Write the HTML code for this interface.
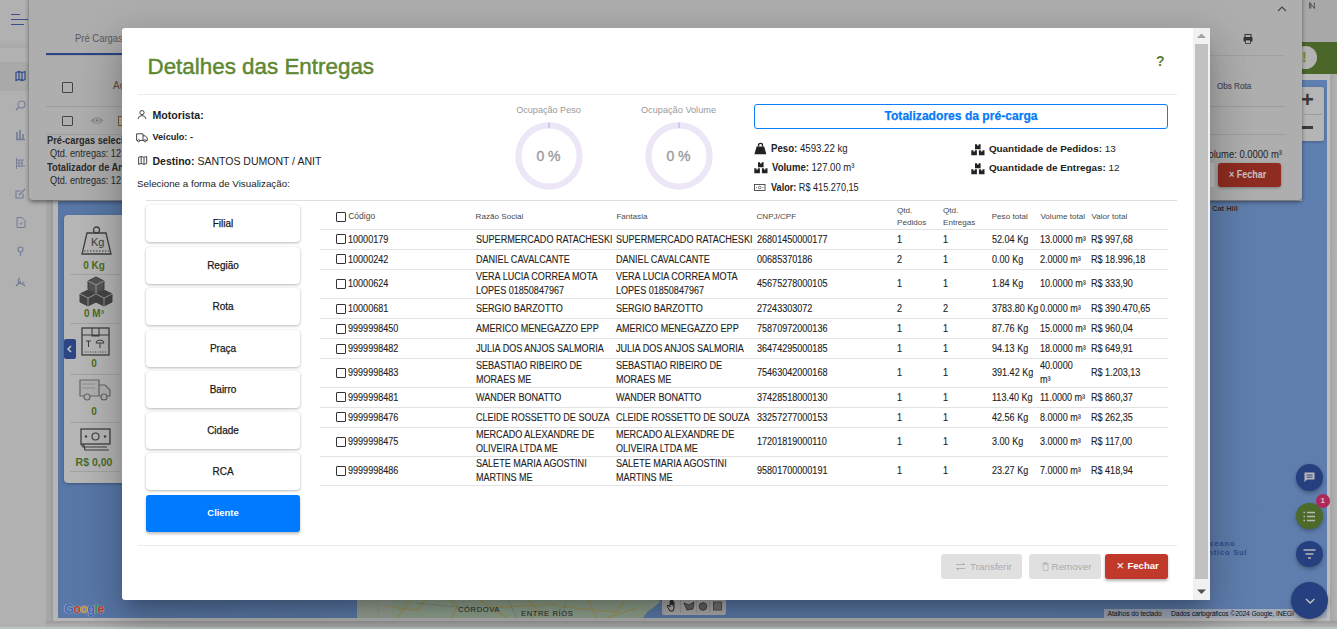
<!DOCTYPE html>
<html><head><meta charset="utf-8">
<style>
*{box-sizing:border-box}
html,body{margin:0;padding:0}
body{width:1337px;height:629px;overflow:hidden;position:relative;background:#b2b2b2;font-family:"Liberation Sans",sans-serif;color:#222}
.a{position:absolute}
.t{position:absolute;white-space:nowrap}
svg{position:absolute;overflow:visible}
</style></head>
<body>

<div class="a" style="left:0px;top:0px;width:1337px;height:629px;background:#b1b1b1"></div>
<div class="a" style="left:0px;top:0px;width:53px;height:629px;background:#b1b1b1"></div>
<div class="a" style="left:0px;top:40px;width:53px;height:8px;background:linear-gradient(#b0b0b0,#a9a9a9)"></div>
<div class="a" style="left:0px;top:62px;width:53px;height:29px;background:#a9a9a9"></div>
<div class="a" style="left:46px;top:199px;width:7px;height:430px;background:#adadad"></div>
<div class="a" style="left:11px;top:13.5px;width:9px;height:1.2px;background:#3a4f8c"></div>
<div class="a" style="left:11px;top:18.8px;width:17px;height:1.2px;background:#3a4f8c"></div>
<div class="a" style="left:11px;top:23.5px;width:13px;height:1.2px;background:#3a4f8c"></div>
<svg style="left:15px;top:71px" width="11" height="10"><path d="M1 1.5 L4 0.5 L7 1.5 L10 0.5 V8.5 L7 9.5 L4 8.5 L1 9.5 Z M4 0.5 V8.5 M7 1.5 V9.5" fill="none" stroke="#2f4a8c" stroke-width="1.2"/></svg>
<svg style="left:15px;top:100px" width="11" height="11"><circle cx="6.5" cy="4.5" r="3.5" fill="none" stroke="#747b95" stroke-width="1.1"/><path d="M4 7 L1 10" stroke="#747b95" stroke-width="1.3"/></svg>
<svg style="left:15px;top:129px" width="11" height="11"><path d="M2 10 V3 M5 10 V1 M8 10 V5 M1 10.5 H10" stroke="#747b95" stroke-width="1.6"/></svg>
<svg style="left:15px;top:158px" width="11" height="11"><path d="M1.5 0 V11 M1.5 2 H9 M1.5 5 H8 M1.5 8 H10 M4 2 V9 M7 2 V9" fill="none" stroke="#747b95" stroke-width="0.9"/></svg>
<svg style="left:15px;top:188px" width="11" height="11"><path d="M8 5.5 V10 H1 V3 H5.5 M4 7 L10 1" fill="none" stroke="#747b95" stroke-width="1.1"/></svg>
<svg style="left:16px;top:217px" width="10" height="11"><path d="M1 0.5 H6 L9 3.5 V10.5 H1 Z M3.5 6 L5 7.5 L6.5 5" fill="none" stroke="#747b95" stroke-width="1"/></svg>
<svg style="left:16px;top:246px" width="9" height="11"><circle cx="4.5" cy="3.5" r="2.5" fill="none" stroke="#747b95" stroke-width="1.1"/><path d="M4.5 6 V10" stroke="#747b95" stroke-width="1.1"/></svg>
<svg style="left:15px;top:276px" width="11" height="11"><path d="M1 10 L6 5 M5 2 A3 3 0 1 0 9 6 M7 7 L10 10" fill="none" stroke="#747b95" stroke-width="1.3"/></svg>
<div class="a" style="left:1302px;top:0px;width:35px;height:43px;background:#a8a8a8"></div>
<svg style="left:1308.5px;top:2px" width="6" height="7"><path d="M0.6 6.5 V0.5 L5.4 6.5 V0.5 M1.8 1.5 V6.5" fill="none" stroke="#4a4a4a" stroke-width="0.9"/></svg>
<div class="a" style="left:1302px;top:42px;width:35px;height:32px;background:#4a6629"></div>
<div class="a" style="left:1293.5px;top:46px;width:23px;height:23px;border-radius:50%;background:#b3b3b3"></div>
<div class="t" style="left:1302px;top:50px;font-size:14px;line-height:15px;font-weight:700;color:#7a8a22">!</div>
<div class="a" style="left:53px;top:199px;width:1277px;height:422px;background:#b6b6b6"></div>
<div class="a" style="left:46px;top:199px;width:7px;height:422px;background:linear-gradient(90deg,#a7a7a7,#a4a4a4 70%,#9a9a9a)"></div>
<div class="a" style="left:1330px;top:74px;width:7px;height:555px;background:linear-gradient(90deg,#a6a6a6,#b2b2b2)"></div>
<div class="a" style="left:1327px;top:74px;width:3px;height:547px;background:#bdbdbd"></div>
<div class="a" style="left:58px;top:201px;width:1269px;height:416.5px;background:linear-gradient(90deg,#5877a7 0%,#5f7faf 30%,#5f7eae 100%)"></div>
<div class="a" style="left:1302px;top:74px;width:25px;height:7px;background:#bababa"></div>
<div class="a" style="left:1302px;top:80px;width:25px;height:121px;background:#5f7fb0"></div>
<div class="a" style="left:1300px;top:87px;width:24px;height:54px;background:#b5b5b5;border-radius:2px;box-shadow:0 1px 3px rgba(0,0,0,.25)"></div>
<div class="a" style="left:1304px;top:114px;width:18px;height:1px;background:#9c9c9c"></div>
<div class="t" style="left:1301px;top:88px;font-size:22px;line-height:24px;color:#3a3a3a;font-weight:700">+</div>
<div class="a" style="left:1301px;top:126px;width:12px;height:2.5px;background:#3a3a3a"></div>
<div class="a" style="left:46px;top:621px;width:1291px;height:6px;background:linear-gradient(#9a9a9a,#a9a9a9 60%,#b0b0b0)"></div>
<div class="a" style="left:0px;top:627px;width:1337px;height:2px;background:#b9c8c3"></div>
<svg style="left:357px;top:598px" width="305" height="20"><path d="M0 0 H300 L303 4 L296 10 L290 14 L286 20 H0 Z" fill="#95a893"/><path d="M0 8 L30 0 M10 20 L25 8 L60 12 L70 0 M40 20 L55 0 M90 0 L100 8 L95 20 M120 0 L150 20 M170 0 L180 10 L175 20 M200 8 L260 14 L270 0 M230 0 L240 20 M280 10 L250 20 M130 10 L200 6" stroke="#a89a58" stroke-width="1.2" fill="none"/><path d="M20 0 L22 20 M60 5 L110 10 M150 0 L160 20 M210 0 L205 20" stroke="#5a665a" stroke-width="0.6" stroke-dasharray="1.5 1.5" fill="none"/><rect x="0" y="0" width="35" height="20" fill="#a3a7a0" opacity="0.6"/></svg>
<div class="t" style="left:458px;top:604.5px;font-size:7.6px;color:#2a2a2a;letter-spacing:0.6px">CÓRDOVA</div>
<div class="t" style="left:521px;top:608.5px;font-size:7.6px;color:#2a2a2a;letter-spacing:0.6px">ENTRE RÍOS</div>
<div class="a" style="left:662px;top:597px;width:64px;height:18px;background:#b3b3b3;border-radius:2px"></div>
<svg style="left:662px;top:597px" width="64" height="18"><path d="M8 14 L5 9 L6 8 L8 10 V4 H9 V8 V3 H10 V8 V3.5 H11 V8.5 V5 H12 V11 L11 14 Z" fill="none" stroke="#2a2a2a" stroke-width="1"/><path d="M22 6 L27 8 L32 5 L31 12 L25 13 Z" fill="#6a6a6a" stroke="#333" stroke-width="0.8"/><line x1="18.5" y1="3" x2="18.5" y2="16" stroke="#a3a3a3"/><line x1="34.5" y1="3" x2="34.5" y2="16" stroke="#a3a3a3"/><line x1="47.5" y1="3" x2="47.5" y2="16" stroke="#a3a3a3"/><circle cx="41" cy="9.5" r="3.8" fill="#6a6a6a" stroke="#333" stroke-width="0.8"/><rect x="51.5" y="5" width="8" height="8" fill="#7a7a7a" stroke="#444" stroke-width="0.8"/></svg>
<div class="t" style="left:64px;top:601.5px;font-size:12.5px;line-height:14px;font-weight:700;letter-spacing:-0.6px;text-shadow:0 0 1px #c8c8c8,0 0 1px #c8c8c8"><span style="color:#3b63b8">G</span><span style="color:#b5392c">o</span><span style="color:#b8922a">o</span><span style="color:#3b63b8">g</span><span style="color:#2f8a45">l</span><span style="color:#b5392c">e</span></div>
<div class="a" style="left:1104px;top:609.3px;width:223px;height:8.3px;background:#a3abbb"></div>
<div class="t" style="left:1107.5px;top:608.5px;font-size:6.8px;line-height:9px;color:#111;letter-spacing:-0.1px">Atalhos do teclado</div>
<div class="t" style="left:1171px;top:608.5px;font-size:6.8px;line-height:9px;color:#111;letter-spacing:-0.15px">Dados cartográficos ©2024 Google, INEGI &nbsp; Termos</div>
<div class="t" style="left:1212px;top:204px;font-size:7.5px;font-weight:700;color:#2a2a2a;text-shadow:0 0 1px #999">Cat Hill</div>
<div class="t" style="left:1203px;top:539px;font-size:7.5px;font-weight:700;color:#2f4c8c;letter-spacing:0.8px">Oceano</div>
<div class="t" style="left:1191px;top:548px;font-size:7.5px;font-weight:700;color:#2f4c8c;letter-spacing:0.8px">Atlântico Sul</div>
<div class="a" style="left:64px;top:215px;width:60px;height:268px;background:#b6b6b6;border-radius:4px 0 0 4px;box-shadow:0 1px 3px rgba(0,0,0,.3)"></div>
<svg style="left:80px;top:226px" width="33" height="30"><circle cx="16.5" cy="4" r="3" fill="none" stroke="#3f3f3f" stroke-width="1.3"/><path d="M7 7 H26 L31 28 H2 Z" fill="none" stroke="#3f3f3f" stroke-width="1.3"/><path d="M4 25 H29" stroke="#3f3f3f" stroke-width="1" stroke-dasharray="1.5 1.5"/><text x="11" y="20" font-size="11" fill="#3f3f3f" font-family="Liberation Sans">Kg</text></svg>
<div class="t" style="left:64px;width:60px;text-align:center;top:260px;font-size:10px;font-weight:700;color:#4d6b1f">0 Kg</div>
<div class="a" style="left:70px;top:274px;width:50px;height:1px;background:#a3a3a3"></div>
<svg style="left:79px;top:276px" width="34" height="31"><path d="M17 1 L25 5 L25 13 L17 17 L9 13 L9 5 Z" fill="#555" stroke="#3f3f3f"/><path d="M9 14 L17 18 L17 26 L9 30 L1 26 L1 18 Z" fill="#444" stroke="#3f3f3f"/><path d="M25 14 L33 18 L33 26 L25 30 L17 26 L17 18 Z" fill="#444" stroke="#3f3f3f"/><path d="M9 5 L17 9 L25 5 M17 9 V17 M1 18 L9 22 L17 18 M9 22 V30 M17 18 L25 22 L33 18 M25 22 V30" stroke="#aaa" stroke-width="0.8" fill="none"/></svg>
<div class="t" style="left:64px;width:60px;text-align:center;top:308px;font-size:10px;font-weight:700;color:#4d6b1f">0 M³</div>
<div class="a" style="left:70px;top:323px;width:50px;height:1px;background:#a3a3a3"></div>
<svg style="left:81px;top:327px" width="29" height="29"><rect x="1" y="1" width="27" height="27" fill="none" stroke="#3f3f3f" stroke-width="1.3"/><path d="M1 8 H28 M11 1 V9 H18 V1" fill="none" stroke="#3f3f3f" stroke-width="1.1"/><path d="M5 14 H10 M7.5 14 V20 M15 16 A4 3 0 0 1 23 16 Z M19 16 V21" stroke="#3f3f3f" fill="none"/><path d="M4 25 H25" stroke="#3f3f3f" stroke-dasharray="1 1.5"/></svg>
<div class="t" style="left:64px;width:60px;text-align:center;top:358px;font-size:10px;font-weight:700;color:#4d6b1f">0</div>
<div class="a" style="left:70px;top:374px;width:50px;height:1px;background:#a3a3a3"></div>
<div class="a" style="left:64px;top:339px;width:12px;height:20px;background:#2b4585;border-radius:2px"></div>
<svg style="left:66px;top:345px" width="8" height="8"><path d="M5 1 L2 4 L5 7" stroke="#c8c8c8" stroke-width="1.5" fill="none"/></svg>
<svg style="left:79px;top:379px" width="32" height="22"><path d="M1 1 H20 V17 H1 Z M20 6 H26 L31 11 V17 H20" fill="#b0b0b0" stroke="#666" stroke-width="1.2"/><circle cx="8" cy="18" r="3" fill="#b0b0b0" stroke="#666" stroke-width="1.2"/><circle cx="25" cy="18" r="3" fill="#b0b0b0" stroke="#666" stroke-width="1.2"/><path d="M3 5 H16 M3 9 H16" stroke="#888" stroke-width="0.8"/></svg>
<div class="t" style="left:64px;width:60px;text-align:center;top:406px;font-size:10px;font-weight:700;color:#4d6b1f">0</div>
<div class="a" style="left:70px;top:422px;width:50px;height:1px;background:#a3a3a3"></div>
<svg style="left:80px;top:428px" width="31" height="25"><path d="M3 14 L5 22 L29 22" fill="none" stroke="#3f3f3f" stroke-width="1.2"/><path d="M1 16 L3 19 L27 19" fill="none" stroke="#3f3f3f" stroke-width="1.2"/><rect x="1" y="1" width="29" height="15" fill="#b6b6b6" stroke="#3f3f3f" stroke-width="1.3"/><circle cx="15.5" cy="8.5" r="3.5" fill="none" stroke="#3f3f3f" stroke-width="1.2"/><circle cx="6" cy="8.5" r="1.2" fill="#3f3f3f"/><circle cx="25" cy="8.5" r="1.2" fill="#3f3f3f"/></svg>
<div class="t" style="left:64px;width:60px;text-align:center;top:456px;font-size:10.5px;font-weight:700;color:#4d6b1f">R$ 0,00</div>
<div class="a" style="left:70px;top:471px;width:50px;height:1px;background:#a3a3a3"></div>
<div class="a" style="left:1296.1000000000001px;top:464.3px;width:26.6px;height:26.6px;border-radius:50%;background:#263f7e;box-shadow:0 2px 4px rgba(0,0,0,.3)"></div>
<svg style="left:1304px;top:472px" width="11" height="11"><path d="M0.5 0.5 H10.5 V7.5 H3 L0.5 10 Z" fill="#b8b8b8"/><path d="M2.5 3 H8.5 M2.5 5.2 H8.5" stroke="#2d4585" stroke-width="1"/></svg>
<div class="a" style="left:1296.1000000000001px;top:502.8px;width:26.6px;height:26.6px;border-radius:50%;background:#4c6a28;box-shadow:0 2px 4px rgba(0,0,0,.3)"></div>
<svg style="left:1303px;top:511px" width="13" height="11"><path d="M4 1.5 H12 M4 5.5 H12 M4 9.5 H12 M0.5 1.5 H2 M0.5 5.5 H2 M0.5 9.5 H2" stroke="#b8b8b8" stroke-width="1.4"/></svg>
<div class="a" style="left:1315.7px;top:494.3px;width:14px;height:14px;border-radius:50%;background:#b0285a"></div>
<div class="t" style="left:1315.7px;width:14px;text-align:center;top:496px;font-size:8px;font-weight:700;color:#c8c8c8">1</div>
<div class="a" style="left:1296.1000000000001px;top:540.7px;width:26.6px;height:26.6px;border-radius:50%;background:#263f7e;box-shadow:0 2px 4px rgba(0,0,0,.3)"></div>
<svg style="left:1303px;top:549px" width="13" height="10"><path d="M0.5 1 H12.5 M2.5 5 H10.5 M5 9 H8" stroke="#b8b8b8" stroke-width="1.3"/></svg>
<div class="a" style="left:1291.3px;top:582.1px;width:36.8px;height:36.8px;border-radius:50%;background:#263f7e;box-shadow:0 2px 4px rgba(0,0,0,.3)"></div>
<svg style="left:1305px;top:597.5px" width="11" height="6"><path d="M1 1 L5.2 5 L9.4 1" stroke="#c0c0c0" stroke-width="1.5" fill="none"/></svg>
<div class="a" style="left:29px;top:-4px;width:1273px;height:203.5px;background:#aeaeae;border-radius:0 0 4px 4px;box-shadow:0 2px 4px rgba(0,0,0,.45)"></div>
<div class="t" style="left:75.4px;top:32px;font-size:10.5px;color:#5a5a5a;transform:scaleX(0.9);transform-origin:0 0">Pré Cargas</div>
<div class="a" style="left:46px;top:52.5px;width:80px;height:2px;background:#2b4585"></div>
<div class="a" style="left:46px;top:106px;width:1239px;height:1px;background:#9d9d9d"></div>
<div class="a" style="left:46px;top:134px;width:1239px;height:1px;background:#9d9d9d"></div>
<div class="a" style="left:46px;top:55px;width:1239px;height:1px;background:#a2a2a2"></div>
<div class="a" style="left:62px;top:82px;width:10.5px;height:10.5px;border:1.2px solid #444;border-radius:1px"></div>
<div class="a" style="left:62px;top:115.5px;width:10.5px;height:10.5px;border:1.2px solid #444;border-radius:1px"></div>
<div class="t" style="left:113px;top:80px;font-size:10px;color:#5a4a3a">Aç</div>
<svg style="left:90.3px;top:116px" width="14" height="9"><path d="M0.3 4.5 Q7 -2.5 13.7 4.5 Q7 11.5 0.3 4.5 Z" fill="#8e8e8e" /><circle cx="7" cy="4.5" r="2.6" fill="#a9a9a9"/><circle cx="7" cy="4.5" r="1.3" fill="#7a7a7a"/></svg>
<div class="a" style="left:118px;top:116px;width:5px;height:10px;border:1.2px solid #7a5a2a"></div>
<div class="t" style="left:47px;top:135.3px;font-size:10px;font-weight:700;color:#2a2a2a;transform:scaleX(0.93);transform-origin:0 0">Pré-cargas selecionadas</div>
<div class="t" style="left:49.7px;top:148.3px;font-size:10px;color:#2a2a2a;transform:scaleX(0.92);transform-origin:0 0">Qtd. entregas: 12</div>
<div class="t" style="left:47px;top:161.8px;font-size:10px;font-weight:700;color:#2a2a2a;transform:scaleX(0.93);transform-origin:0 0">Totalizador de Análise</div>
<div class="t" style="left:49.7px;top:175.3px;font-size:10px;color:#2a2a2a;transform:scaleX(0.92);transform-origin:0 0">Qtd. entregas: 12</div>
<svg style="left:1277px;top:5px" width="10" height="7"><path d="M1 6 L5 2 L9 6" stroke="#444" stroke-width="1.1" fill="none"/></svg>
<svg style="left:1243px;top:34px" width="10" height="10"><rect x="2" y="0.5" width="6" height="3" fill="none" stroke="#333"/><rect x="0.5" y="3" width="9" height="4.5" rx="1" fill="#333"/><rect x="2.5" y="6" width="5" height="3.5" fill="#b2b2b2" stroke="#333" stroke-width="0.8"/></svg>
<div class="t" style="left:1216.5px;top:81px;font-size:8.7px;line-height:10px;color:#4a4a5e;-webkit-text-stroke:0.2px #4a4a5e;transform:scaleX(0.93);transform-origin:0 0">Obs Rota</div>
<div class="t" style="left:1082px;width:200px;text-align:right;top:147.5px;font-size:10.5px;color:#222;transform:scaleX(0.9);transform-origin:100% 0">Volume: 0.0000 m³</div>
<div class="a" style="left:1210px;top:163px;width:4px;height:24px;background:#c0c0c0"></div>
<div class="a" style="left:1218px;top:163px;width:63px;height:24px;background:#8f2c21;border-radius:3px;box-shadow:0 1px 3px rgba(0,0,0,.3)"></div>
<div class="t" style="left:1229px;top:168.5px;font-size:10px;font-weight:700;color:#c4c4c4;transform:scaleX(0.9);transform-origin:0 0">× Fechar</div>
<div class="a" style="left:122px;top:28px;width:1088px;height:572px;background:#fff;border-radius:3px;box-shadow:0 11px 15px -7px rgba(0,0,0,.2),0 24px 38px 3px rgba(0,0,0,.14),0 9px 46px 8px rgba(0,0,0,.12)"></div>
<div class="t" style="left:147.5px;top:54.12px;font-size:22.4px;line-height:25.76px;font-weight:400;color:#5e8832;letter-spacing:0px;-webkit-text-stroke:0.45px #5e8832">Detalhes das Entregas</div>
<div class="t" style="left:1156px;top:52.95px;font-size:14px;line-height:16.10px;font-weight:700;color:#5a8030;letter-spacing:0px;">?</div>
<div class="a" style="left:138px;top:94px;width:1039px;height:1px;background:#e9ecef"></div>
<div class="t" style="left:152.5px;top:108.91px;font-size:10.6px;line-height:12.19px;font-weight:700;color:#222;letter-spacing:0px;">Motorista:</div>
<div class="t" style="left:152.5px;top:132.27px;font-size:9.1px;line-height:10.46px;font-weight:700;color:#222;letter-spacing:0px;">Veículo: -</div>
<div class="t" style="left:152.5px;top:154.96px;font-size:10.5px;line-height:12.07px;font-weight:400;color:#222;letter-spacing:0px;"><b>Destino:</b> SANTOS DUMONT / ANIT</div>
<div class="t" style="left:137px;top:177.87px;font-size:9.8px;line-height:11.27px;font-weight:400;color:#222;letter-spacing:0px;">Selecione a forma de Visualização:</div>
<svg style="left:137px;top:110px" width="10" height="10"><circle cx="5" cy="2.6" r="2.1" fill="none" stroke="#333" stroke-width="0.9"/><path d="M1 9 Q1.5 5.6 5 5.6 Q8.5 5.6 9 9" fill="none" stroke="#333" stroke-width="0.9"/></svg>
<svg style="left:136px;top:132.5px" width="12" height="10"><path d="M0.6 0.8 H7 V7.4 H0.6 Z M7 2.8 H9.3 L11.3 5 V7.4 H7" fill="none" stroke="#333" stroke-width="0.9"/><circle cx="2.6" cy="7.8" r="1.1" fill="#fff" stroke="#333" stroke-width="0.8"/><circle cx="9" cy="7.8" r="1.1" fill="#fff" stroke="#333" stroke-width="0.8"/></svg>
<svg style="left:137.5px;top:156px" width="10" height="9"><path d="M0.6 1.3 L3.2 0.5 L6 1.3 L8.7 0.5 V7.5 L6 8.3 L3.2 7.5 L0.6 8.3 Z M3.2 0.5 V7.5 M6 1.3 V8.3" fill="none" stroke="#333" stroke-width="0.9"/></svg>
<svg style="left:753.5px;top:142.5px" width="13" height="12"><path d="M4.5 3.6 V2 A2 1.6 0 0 1 8.5 2 V3.6" fill="none" stroke="#222" stroke-width="1.3"/><path d="M2.6 3.6 H10.2 L12.3 11.2 H0.4 Z" fill="#222"/></svg>
<svg style="left:753.8px;top:161.5px" width="14" height="12"><path d="M4 0.2 h2 v1.3 h1.6 v-1.3 h2 v5 h-5.6 z" fill="#222"/><path d="M0.3 6.2 h2 v1.3 h1.6 v-1.3 h2 v5 h-5.6 z" fill="#222"/><path d="M7.9 6.2 h2 v1.3 h1.6 v-1.3 h2 v5 h-5.6 z" fill="#222"/></svg>
<svg style="left:970.6px;top:143.5px" width="14" height="12"><path d="M4 0.2 h2 v1.3 h1.6 v-1.3 h2 v5 h-5.6 z" fill="#222"/><path d="M0.3 6.2 h2 v1.3 h1.6 v-1.3 h2 v5 h-5.6 z" fill="#222"/><path d="M7.9 6.2 h2 v1.3 h1.6 v-1.3 h2 v5 h-5.6 z" fill="#222"/></svg>
<svg style="left:970.6px;top:162.5px" width="14" height="12"><path d="M4 0.2 h2 v1.3 h1.6 v-1.3 h2 v5 h-5.6 z" fill="#222"/><path d="M0.3 6.2 h2 v1.3 h1.6 v-1.3 h2 v5 h-5.6 z" fill="#222"/><path d="M7.9 6.2 h2 v1.3 h1.6 v-1.3 h2 v5 h-5.6 z" fill="#222"/></svg>
<svg style="left:754px;top:183.8px" width="12" height="8"><rect x="0.5" y="0.5" width="10.5" height="6" fill="none" stroke="#444" stroke-width="0.9"/><circle cx="5.75" cy="3.5" r="1.3" fill="none" stroke="#444" stroke-width="0.7"/><path d="M2 3.5 H3 M8.5 3.5 H9.5" stroke="#444" stroke-width="0.7"/></svg>
<div class="t" style="left:348.5px;width:400px;text-align:center;top:104.77px;font-size:9.1px;line-height:10.46px;font-weight:400;color:#9a9a9a;letter-spacing:0px;">Ocupação Peso</div>
<svg style="left:514.5px;top:122.4px" width="68" height="68"><circle cx="34" cy="34" r="30.6" fill="none" stroke="#ece6f6" stroke-width="6.1"/><line x1="34" y1="0.5" x2="34" y2="6.2" stroke="#9aa6dc" stroke-width="0.8"/></svg>
<div class="t" style="left:348.5px;width:400px;text-align:center;top:147.95px;font-size:14px;line-height:16.10px;font-weight:400;color:#9a9a9a;letter-spacing:0px;-webkit-text-stroke:0.35px #9a9a9a">0 %</div>
<div class="t" style="left:478.5px;width:400px;text-align:center;top:104.71px;font-size:9.2px;line-height:10.58px;font-weight:400;color:#9a9a9a;letter-spacing:0px;">Ocupação Volume</div>
<svg style="left:644.5px;top:122.4px" width="68" height="68"><circle cx="34" cy="34" r="30.6" fill="none" stroke="#ece6f6" stroke-width="6.1"/><line x1="34" y1="0.5" x2="34" y2="6.2" stroke="#9aa6dc" stroke-width="0.8"/></svg>
<div class="t" style="left:478.5px;width:400px;text-align:center;top:147.95px;font-size:14px;line-height:16.10px;font-weight:400;color:#9a9a9a;letter-spacing:0px;-webkit-text-stroke:0.35px #9a9a9a">0 %</div>
<div class="a" style="left:754px;top:104px;width:414px;height:25px;border:1px solid #0d7df7;border-radius:3px"></div>
<div class="t" style="left:761px;width:400px;text-align:center;top:109.54px;font-size:12.1px;line-height:13.91px;font-weight:700;color:#087af7;letter-spacing:0px;-webkit-text-stroke:0.25px #087af7">Totalizadores da pré-carga</div>
<div class="t" style="left:770.5px;top:142.21px;font-size:10.6px;line-height:12.19px;font-weight:400;color:#222;letter-spacing:0px;transform:scaleX(0.91);transform-origin:0 0"><b>Peso:</b> 4593.22 kg</div>
<div class="t" style="left:771.9px;top:161.21px;font-size:10.6px;line-height:12.19px;font-weight:400;color:#222;letter-spacing:0px;transform:scaleX(0.90);transform-origin:0 0"><b>Volume:</b> 127.00 m³</div>
<div class="t" style="left:770.5px;top:180.91px;font-size:10.6px;line-height:12.19px;font-weight:400;color:#222;letter-spacing:0px;transform:scaleX(0.86);transform-origin:0 0"><b>Valor:</b> R$ 415.270,15</div>
<div class="t" style="left:988.9px;top:142.61px;font-size:9.9px;line-height:11.38px;font-weight:400;color:#222;letter-spacing:0px;"><b>Quantidade de Pedidos:</b> 13</div>
<div class="t" style="left:988.9px;top:161.61px;font-size:9.9px;line-height:11.38px;font-weight:400;color:#222;letter-spacing:0px;"><b>Quantidade de Entregas:</b> 12</div>
<div class="a" style="left:146px;top:200px;width:1031px;height:1px;background:#dfdfdf"></div>
<div class="a" style="left:146px;top:205px;width:154px;height:37px;background:#fff;border-radius:4px;box-shadow:0 1px 3px rgba(0,0,0,.28),0 0 1px rgba(0,0,0,.08)"></div>
<div class="t" style="left:23px;width:400px;text-align:center;top:217.75px;font-size:10px;line-height:11.50px;font-weight:400;color:#1a1a1a;letter-spacing:0px;-webkit-text-stroke:0.25px #1a1a1a">Filial</div>
<div class="a" style="left:146px;top:247px;width:154px;height:37px;background:#fff;border-radius:4px;box-shadow:0 1px 3px rgba(0,0,0,.28),0 0 1px rgba(0,0,0,.08)"></div>
<div class="t" style="left:23px;width:400px;text-align:center;top:259.75px;font-size:10px;line-height:11.50px;font-weight:400;color:#1a1a1a;letter-spacing:0px;-webkit-text-stroke:0.25px #1a1a1a">Região</div>
<div class="a" style="left:146px;top:288px;width:154px;height:37px;background:#fff;border-radius:4px;box-shadow:0 1px 3px rgba(0,0,0,.28),0 0 1px rgba(0,0,0,.08)"></div>
<div class="t" style="left:23px;width:400px;text-align:center;top:300.75px;font-size:10px;line-height:11.50px;font-weight:400;color:#1a1a1a;letter-spacing:0px;-webkit-text-stroke:0.25px #1a1a1a">Rota</div>
<div class="a" style="left:146px;top:330px;width:154px;height:37px;background:#fff;border-radius:4px;box-shadow:0 1px 3px rgba(0,0,0,.28),0 0 1px rgba(0,0,0,.08)"></div>
<div class="t" style="left:23px;width:400px;text-align:center;top:342.75px;font-size:10px;line-height:11.50px;font-weight:400;color:#1a1a1a;letter-spacing:0px;-webkit-text-stroke:0.25px #1a1a1a">Praça</div>
<div class="a" style="left:146px;top:371px;width:154px;height:37px;background:#fff;border-radius:4px;box-shadow:0 1px 3px rgba(0,0,0,.28),0 0 1px rgba(0,0,0,.08)"></div>
<div class="t" style="left:23px;width:400px;text-align:center;top:383.75px;font-size:10px;line-height:11.50px;font-weight:400;color:#1a1a1a;letter-spacing:0px;-webkit-text-stroke:0.25px #1a1a1a">Bairro</div>
<div class="a" style="left:146px;top:412px;width:154px;height:37px;background:#fff;border-radius:4px;box-shadow:0 1px 3px rgba(0,0,0,.28),0 0 1px rgba(0,0,0,.08)"></div>
<div class="t" style="left:23px;width:400px;text-align:center;top:424.75px;font-size:10px;line-height:11.50px;font-weight:400;color:#1a1a1a;letter-spacing:0px;-webkit-text-stroke:0.25px #1a1a1a">Cidade</div>
<div class="a" style="left:146px;top:453px;width:154px;height:37px;background:#fff;border-radius:4px;box-shadow:0 1px 3px rgba(0,0,0,.28),0 0 1px rgba(0,0,0,.08)"></div>
<div class="t" style="left:23px;width:400px;text-align:center;top:465.75px;font-size:10px;line-height:11.50px;font-weight:400;color:#1a1a1a;letter-spacing:0px;-webkit-text-stroke:0.25px #1a1a1a">RCA</div>
<div class="a" style="left:146px;top:495px;width:154px;height:37px;background:#007bff;border-radius:3px;box-shadow:0 2px 3px rgba(0,0,0,.25)"></div>
<div class="t" style="left:23px;width:400px;text-align:center;top:508.39px;font-size:9.4px;line-height:10.81px;font-weight:700;color:#fff;letter-spacing:0px;">Cliente</div>
<div class="a" style="left:336px;top:212px;width:10px;height:10px;border:1px solid #333;border-radius:1px;background:#fff"></div>
<div class="t" style="left:348.2px;top:211.61px;font-size:8.5px;line-height:9.77px;font-weight:400;color:#4a4a4a;letter-spacing:0px;">Código</div>
<div class="t" style="left:475.6px;top:211.84px;font-size:8.1px;line-height:9.31px;font-weight:400;color:#4a4a4a;letter-spacing:0px;">Razão Social</div>
<div class="t" style="left:616.4px;top:211.84px;font-size:8.1px;line-height:9.31px;font-weight:400;color:#4a4a4a;letter-spacing:0px;">Fantasia</div>
<div class="t" style="left:756.5px;top:211.84px;font-size:8.1px;line-height:9.31px;font-weight:400;color:#4a4a4a;letter-spacing:0px;">CNPJ/CPF</div>
<div class="t" style="left:897px;top:205.84px;font-size:8.1px;line-height:9.31px;font-weight:400;color:#4a4a4a;letter-spacing:0px;">Qtd.</div>
<div class="t" style="left:897px;top:217.64px;font-size:8.1px;line-height:9.31px;font-weight:400;color:#4a4a4a;letter-spacing:0px;">Pedidos</div>
<div class="t" style="left:943px;top:205.84px;font-size:8.1px;line-height:9.31px;font-weight:400;color:#4a4a4a;letter-spacing:0px;">Qtd.</div>
<div class="t" style="left:943px;top:217.64px;font-size:8.1px;line-height:9.31px;font-weight:400;color:#4a4a4a;letter-spacing:0px;">Entregas</div>
<div class="t" style="left:991.7px;top:211.84px;font-size:8.1px;line-height:9.31px;font-weight:400;color:#4a4a4a;letter-spacing:0px;">Peso total</div>
<div class="t" style="left:1040.4px;top:211.84px;font-size:8.1px;line-height:9.31px;font-weight:400;color:#4a4a4a;letter-spacing:0px;">Volume total</div>
<div class="t" style="left:1091.4px;top:211.84px;font-size:8.1px;line-height:9.31px;font-weight:400;color:#4a4a4a;letter-spacing:0px;">Valor total</div>
<div class="a" style="left:320px;top:229px;width:848px;height:1px;background:#e2e2e2"></div>
<div class="a" style="left:320px;top:249px;width:848px;height:1px;background:#e2e2e2"></div>
<div class="a" style="left:320px;top:269px;width:848px;height:1px;background:#e2e2e2"></div>
<div class="a" style="left:320px;top:298px;width:848px;height:1px;background:#e2e2e2"></div>
<div class="a" style="left:320px;top:318px;width:848px;height:1px;background:#e2e2e2"></div>
<div class="a" style="left:320px;top:338px;width:848px;height:1px;background:#e2e2e2"></div>
<div class="a" style="left:320px;top:358px;width:848px;height:1px;background:#e2e2e2"></div>
<div class="a" style="left:320px;top:387px;width:848px;height:1px;background:#e2e2e2"></div>
<div class="a" style="left:320px;top:407px;width:848px;height:1px;background:#e2e2e2"></div>
<div class="a" style="left:320px;top:427px;width:848px;height:1px;background:#e2e2e2"></div>
<div class="a" style="left:320px;top:456px;width:848px;height:1px;background:#e2e2e2"></div>
<div class="a" style="left:320px;top:485px;width:848px;height:1px;background:#e2e2e2"></div>
<div class="a" style="left:336px;top:234px;width:10px;height:10px;border:1px solid #333;border-radius:1px;background:#fff"></div>
<div class="t" style="left:348.2px;top:233.65px;font-size:10px;line-height:11.50px;font-weight:400;color:#1e1e1e;letter-spacing:0px;transform:scaleX(0.905);transform-origin:0 50%;-webkit-text-stroke:0.12px #222">10000179</div>
<div class="t" style="left:475.6px;top:233.65px;font-size:10px;line-height:11.50px;font-weight:400;color:#1e1e1e;letter-spacing:0px;transform:scaleX(0.905);transform-origin:0 50%;-webkit-text-stroke:0.12px #222">SUPERMERCADO RATACHESKI</div>
<div class="t" style="left:616.4px;top:233.65px;font-size:10px;line-height:11.50px;font-weight:400;color:#1e1e1e;letter-spacing:0px;transform:scaleX(0.905);transform-origin:0 50%;-webkit-text-stroke:0.12px #222">SUPERMERCADO RATACHESKI</div>
<div class="t" style="left:756.5px;top:233.65px;font-size:10px;line-height:11.50px;font-weight:400;color:#1e1e1e;letter-spacing:0px;transform:scaleX(0.905);transform-origin:0 50%;-webkit-text-stroke:0.12px #222">26801450000177</div>
<div class="t" style="left:897px;top:233.65px;font-size:10px;line-height:11.50px;font-weight:400;color:#1e1e1e;letter-spacing:0px;transform:scaleX(0.905);transform-origin:0 50%;-webkit-text-stroke:0.12px #222">1</div>
<div class="t" style="left:943px;top:233.65px;font-size:10px;line-height:11.50px;font-weight:400;color:#1e1e1e;letter-spacing:0px;transform:scaleX(0.905);transform-origin:0 50%;-webkit-text-stroke:0.12px #222">1</div>
<div class="t" style="left:991.7px;top:233.65px;font-size:10px;line-height:11.50px;font-weight:400;color:#1e1e1e;letter-spacing:0px;transform:scaleX(0.905);transform-origin:0 50%;-webkit-text-stroke:0.12px #222">52.04 Kg</div>
<div class="t" style="left:1040.4px;top:233.65px;font-size:10px;line-height:11.50px;font-weight:400;color:#1e1e1e;letter-spacing:0px;transform:scaleX(0.905);transform-origin:0 50%;-webkit-text-stroke:0.12px #222">13.0000 m³</div>
<div class="t" style="left:1091.4px;top:233.65px;font-size:10px;line-height:11.50px;font-weight:400;color:#1e1e1e;letter-spacing:0px;transform:scaleX(0.905);transform-origin:0 50%;-webkit-text-stroke:0.12px #222">R$ 997,68</div>
<div class="a" style="left:336px;top:254px;width:10px;height:10px;border:1px solid #333;border-radius:1px;background:#fff"></div>
<div class="t" style="left:348.2px;top:253.60px;font-size:10px;line-height:11.50px;font-weight:400;color:#1e1e1e;letter-spacing:0px;transform:scaleX(0.905);transform-origin:0 50%;-webkit-text-stroke:0.12px #222">10000242</div>
<div class="t" style="left:475.6px;top:253.60px;font-size:10px;line-height:11.50px;font-weight:400;color:#1e1e1e;letter-spacing:0px;transform:scaleX(0.905);transform-origin:0 50%;-webkit-text-stroke:0.12px #222">DANIEL CAVALCANTE</div>
<div class="t" style="left:616.4px;top:253.60px;font-size:10px;line-height:11.50px;font-weight:400;color:#1e1e1e;letter-spacing:0px;transform:scaleX(0.905);transform-origin:0 50%;-webkit-text-stroke:0.12px #222">DANIEL CAVALCANTE</div>
<div class="t" style="left:756.5px;top:253.60px;font-size:10px;line-height:11.50px;font-weight:400;color:#1e1e1e;letter-spacing:0px;transform:scaleX(0.905);transform-origin:0 50%;-webkit-text-stroke:0.12px #222">00685370186</div>
<div class="t" style="left:897px;top:253.60px;font-size:10px;line-height:11.50px;font-weight:400;color:#1e1e1e;letter-spacing:0px;transform:scaleX(0.905);transform-origin:0 50%;-webkit-text-stroke:0.12px #222">2</div>
<div class="t" style="left:943px;top:253.60px;font-size:10px;line-height:11.50px;font-weight:400;color:#1e1e1e;letter-spacing:0px;transform:scaleX(0.905);transform-origin:0 50%;-webkit-text-stroke:0.12px #222">1</div>
<div class="t" style="left:991.7px;top:253.60px;font-size:10px;line-height:11.50px;font-weight:400;color:#1e1e1e;letter-spacing:0px;transform:scaleX(0.905);transform-origin:0 50%;-webkit-text-stroke:0.12px #222">0.00 Kg</div>
<div class="t" style="left:1040.4px;top:253.60px;font-size:10px;line-height:11.50px;font-weight:400;color:#1e1e1e;letter-spacing:0px;transform:scaleX(0.905);transform-origin:0 50%;-webkit-text-stroke:0.12px #222">2.0000 m³</div>
<div class="t" style="left:1091.4px;top:253.60px;font-size:10px;line-height:11.50px;font-weight:400;color:#1e1e1e;letter-spacing:0px;transform:scaleX(0.905);transform-origin:0 50%;-webkit-text-stroke:0.12px #222">R$ 18.996,18</div>
<div class="a" style="left:336px;top:279px;width:10px;height:10px;border:1px solid #333;border-radius:1px;background:#fff"></div>
<div class="t" style="left:348.2px;top:278.20px;font-size:10px;line-height:11.50px;font-weight:400;color:#1e1e1e;letter-spacing:0px;transform:scaleX(0.905);transform-origin:0 50%;-webkit-text-stroke:0.12px #222">10000624</div>
<div class="t" style="left:475.6px;top:271.30px;font-size:10px;line-height:11.50px;font-weight:400;color:#1e1e1e;letter-spacing:0px;transform:scaleX(0.905);transform-origin:0 50%;-webkit-text-stroke:0.12px #222">VERA LUCIA CORREA MOTA</div>
<div class="t" style="left:475.6px;top:285.10px;font-size:10px;line-height:11.50px;font-weight:400;color:#1e1e1e;letter-spacing:0px;transform:scaleX(0.905);transform-origin:0 50%;-webkit-text-stroke:0.12px #222">LOPES 01850847967</div>
<div class="t" style="left:616.4px;top:271.30px;font-size:10px;line-height:11.50px;font-weight:400;color:#1e1e1e;letter-spacing:0px;transform:scaleX(0.905);transform-origin:0 50%;-webkit-text-stroke:0.12px #222">VERA LUCIA CORREA MOTA</div>
<div class="t" style="left:616.4px;top:285.10px;font-size:10px;line-height:11.50px;font-weight:400;color:#1e1e1e;letter-spacing:0px;transform:scaleX(0.905);transform-origin:0 50%;-webkit-text-stroke:0.12px #222">LOPES 01850847967</div>
<div class="t" style="left:756.5px;top:278.20px;font-size:10px;line-height:11.50px;font-weight:400;color:#1e1e1e;letter-spacing:0px;transform:scaleX(0.905);transform-origin:0 50%;-webkit-text-stroke:0.12px #222">45675278000105</div>
<div class="t" style="left:897px;top:278.20px;font-size:10px;line-height:11.50px;font-weight:400;color:#1e1e1e;letter-spacing:0px;transform:scaleX(0.905);transform-origin:0 50%;-webkit-text-stroke:0.12px #222">1</div>
<div class="t" style="left:943px;top:278.20px;font-size:10px;line-height:11.50px;font-weight:400;color:#1e1e1e;letter-spacing:0px;transform:scaleX(0.905);transform-origin:0 50%;-webkit-text-stroke:0.12px #222">1</div>
<div class="t" style="left:991.7px;top:278.20px;font-size:10px;line-height:11.50px;font-weight:400;color:#1e1e1e;letter-spacing:0px;transform:scaleX(0.905);transform-origin:0 50%;-webkit-text-stroke:0.12px #222">1.84 Kg</div>
<div class="t" style="left:1040.4px;top:278.20px;font-size:10px;line-height:11.50px;font-weight:400;color:#1e1e1e;letter-spacing:0px;transform:scaleX(0.905);transform-origin:0 50%;-webkit-text-stroke:0.12px #222">10.0000 m³</div>
<div class="t" style="left:1091.4px;top:278.20px;font-size:10px;line-height:11.50px;font-weight:400;color:#1e1e1e;letter-spacing:0px;transform:scaleX(0.905);transform-origin:0 50%;-webkit-text-stroke:0.12px #222">R$ 333,90</div>
<div class="a" style="left:336px;top:304px;width:10px;height:10px;border:1px solid #333;border-radius:1px;background:#fff"></div>
<div class="t" style="left:348.2px;top:302.80px;font-size:10px;line-height:11.50px;font-weight:400;color:#1e1e1e;letter-spacing:0px;transform:scaleX(0.905);transform-origin:0 50%;-webkit-text-stroke:0.12px #222">10000681</div>
<div class="t" style="left:475.6px;top:302.80px;font-size:10px;line-height:11.50px;font-weight:400;color:#1e1e1e;letter-spacing:0px;transform:scaleX(0.905);transform-origin:0 50%;-webkit-text-stroke:0.12px #222">SERGIO BARZOTTO</div>
<div class="t" style="left:616.4px;top:302.80px;font-size:10px;line-height:11.50px;font-weight:400;color:#1e1e1e;letter-spacing:0px;transform:scaleX(0.905);transform-origin:0 50%;-webkit-text-stroke:0.12px #222">SERGIO BARZOTTO</div>
<div class="t" style="left:756.5px;top:302.80px;font-size:10px;line-height:11.50px;font-weight:400;color:#1e1e1e;letter-spacing:0px;transform:scaleX(0.905);transform-origin:0 50%;-webkit-text-stroke:0.12px #222">27243303072</div>
<div class="t" style="left:897px;top:302.80px;font-size:10px;line-height:11.50px;font-weight:400;color:#1e1e1e;letter-spacing:0px;transform:scaleX(0.905);transform-origin:0 50%;-webkit-text-stroke:0.12px #222">2</div>
<div class="t" style="left:943px;top:302.80px;font-size:10px;line-height:11.50px;font-weight:400;color:#1e1e1e;letter-spacing:0px;transform:scaleX(0.905);transform-origin:0 50%;-webkit-text-stroke:0.12px #222">2</div>
<div class="t" style="left:991.7px;top:302.80px;font-size:10px;line-height:11.50px;font-weight:400;color:#1e1e1e;letter-spacing:0px;transform:scaleX(0.905);transform-origin:0 50%;-webkit-text-stroke:0.12px #222">3783.80 Kg</div>
<div class="t" style="left:1040.4px;top:302.80px;font-size:10px;line-height:11.50px;font-weight:400;color:#1e1e1e;letter-spacing:0px;transform:scaleX(0.905);transform-origin:0 50%;-webkit-text-stroke:0.12px #222">0.0000 m³</div>
<div class="t" style="left:1091.4px;top:302.80px;font-size:10px;line-height:11.50px;font-weight:400;color:#1e1e1e;letter-spacing:0px;transform:scaleX(0.905);transform-origin:0 50%;-webkit-text-stroke:0.12px #222">R$ 390.470,65</div>
<div class="a" style="left:336px;top:324px;width:10px;height:10px;border:1px solid #333;border-radius:1px;background:#fff"></div>
<div class="t" style="left:348.2px;top:322.75px;font-size:10px;line-height:11.50px;font-weight:400;color:#1e1e1e;letter-spacing:0px;transform:scaleX(0.905);transform-origin:0 50%;-webkit-text-stroke:0.12px #222">9999998450</div>
<div class="t" style="left:475.6px;top:322.75px;font-size:10px;line-height:11.50px;font-weight:400;color:#1e1e1e;letter-spacing:0px;transform:scaleX(0.905);transform-origin:0 50%;-webkit-text-stroke:0.12px #222">AMERICO MENEGAZZO EPP</div>
<div class="t" style="left:616.4px;top:322.75px;font-size:10px;line-height:11.50px;font-weight:400;color:#1e1e1e;letter-spacing:0px;transform:scaleX(0.905);transform-origin:0 50%;-webkit-text-stroke:0.12px #222">AMERICO MENEGAZZO EPP</div>
<div class="t" style="left:756.5px;top:322.75px;font-size:10px;line-height:11.50px;font-weight:400;color:#1e1e1e;letter-spacing:0px;transform:scaleX(0.905);transform-origin:0 50%;-webkit-text-stroke:0.12px #222">75870972000136</div>
<div class="t" style="left:897px;top:322.75px;font-size:10px;line-height:11.50px;font-weight:400;color:#1e1e1e;letter-spacing:0px;transform:scaleX(0.905);transform-origin:0 50%;-webkit-text-stroke:0.12px #222">1</div>
<div class="t" style="left:943px;top:322.75px;font-size:10px;line-height:11.50px;font-weight:400;color:#1e1e1e;letter-spacing:0px;transform:scaleX(0.905);transform-origin:0 50%;-webkit-text-stroke:0.12px #222">1</div>
<div class="t" style="left:991.7px;top:322.75px;font-size:10px;line-height:11.50px;font-weight:400;color:#1e1e1e;letter-spacing:0px;transform:scaleX(0.905);transform-origin:0 50%;-webkit-text-stroke:0.12px #222">87.76 Kg</div>
<div class="t" style="left:1040.4px;top:322.75px;font-size:10px;line-height:11.50px;font-weight:400;color:#1e1e1e;letter-spacing:0px;transform:scaleX(0.905);transform-origin:0 50%;-webkit-text-stroke:0.12px #222">15.0000 m³</div>
<div class="t" style="left:1091.4px;top:322.75px;font-size:10px;line-height:11.50px;font-weight:400;color:#1e1e1e;letter-spacing:0px;transform:scaleX(0.905);transform-origin:0 50%;-webkit-text-stroke:0.12px #222">R$ 960,04</div>
<div class="a" style="left:336px;top:344px;width:10px;height:10px;border:1px solid #333;border-radius:1px;background:#fff"></div>
<div class="t" style="left:348.2px;top:342.75px;font-size:10px;line-height:11.50px;font-weight:400;color:#1e1e1e;letter-spacing:0px;transform:scaleX(0.905);transform-origin:0 50%;-webkit-text-stroke:0.12px #222">9999998482</div>
<div class="t" style="left:475.6px;top:342.75px;font-size:10px;line-height:11.50px;font-weight:400;color:#1e1e1e;letter-spacing:0px;transform:scaleX(0.905);transform-origin:0 50%;-webkit-text-stroke:0.12px #222">JULIA DOS ANJOS SALMORIA</div>
<div class="t" style="left:616.4px;top:342.75px;font-size:10px;line-height:11.50px;font-weight:400;color:#1e1e1e;letter-spacing:0px;transform:scaleX(0.905);transform-origin:0 50%;-webkit-text-stroke:0.12px #222">JULIA DOS ANJOS SALMORIA</div>
<div class="t" style="left:756.5px;top:342.75px;font-size:10px;line-height:11.50px;font-weight:400;color:#1e1e1e;letter-spacing:0px;transform:scaleX(0.905);transform-origin:0 50%;-webkit-text-stroke:0.12px #222">36474295000185</div>
<div class="t" style="left:897px;top:342.75px;font-size:10px;line-height:11.50px;font-weight:400;color:#1e1e1e;letter-spacing:0px;transform:scaleX(0.905);transform-origin:0 50%;-webkit-text-stroke:0.12px #222">1</div>
<div class="t" style="left:943px;top:342.75px;font-size:10px;line-height:11.50px;font-weight:400;color:#1e1e1e;letter-spacing:0px;transform:scaleX(0.905);transform-origin:0 50%;-webkit-text-stroke:0.12px #222">1</div>
<div class="t" style="left:991.7px;top:342.75px;font-size:10px;line-height:11.50px;font-weight:400;color:#1e1e1e;letter-spacing:0px;transform:scaleX(0.905);transform-origin:0 50%;-webkit-text-stroke:0.12px #222">94.13 Kg</div>
<div class="t" style="left:1040.4px;top:342.75px;font-size:10px;line-height:11.50px;font-weight:400;color:#1e1e1e;letter-spacing:0px;transform:scaleX(0.905);transform-origin:0 50%;-webkit-text-stroke:0.12px #222">18.0000 m³</div>
<div class="t" style="left:1091.4px;top:342.75px;font-size:10px;line-height:11.50px;font-weight:400;color:#1e1e1e;letter-spacing:0px;transform:scaleX(0.905);transform-origin:0 50%;-webkit-text-stroke:0.12px #222">R$ 649,91</div>
<div class="a" style="left:336px;top:368px;width:10px;height:10px;border:1px solid #333;border-radius:1px;background:#fff"></div>
<div class="t" style="left:348.2px;top:367.20px;font-size:10px;line-height:11.50px;font-weight:400;color:#1e1e1e;letter-spacing:0px;transform:scaleX(0.905);transform-origin:0 50%;-webkit-text-stroke:0.12px #222">9999998483</div>
<div class="t" style="left:475.6px;top:360.30px;font-size:10px;line-height:11.50px;font-weight:400;color:#1e1e1e;letter-spacing:0px;transform:scaleX(0.905);transform-origin:0 50%;-webkit-text-stroke:0.12px #222">SEBASTIAO RIBEIRO DE</div>
<div class="t" style="left:475.6px;top:374.10px;font-size:10px;line-height:11.50px;font-weight:400;color:#1e1e1e;letter-spacing:0px;transform:scaleX(0.905);transform-origin:0 50%;-webkit-text-stroke:0.12px #222">MORAES ME</div>
<div class="t" style="left:616.4px;top:360.30px;font-size:10px;line-height:11.50px;font-weight:400;color:#1e1e1e;letter-spacing:0px;transform:scaleX(0.905);transform-origin:0 50%;-webkit-text-stroke:0.12px #222">SEBASTIAO RIBEIRO DE</div>
<div class="t" style="left:616.4px;top:374.10px;font-size:10px;line-height:11.50px;font-weight:400;color:#1e1e1e;letter-spacing:0px;transform:scaleX(0.905);transform-origin:0 50%;-webkit-text-stroke:0.12px #222">MORAES ME</div>
<div class="t" style="left:756.5px;top:367.20px;font-size:10px;line-height:11.50px;font-weight:400;color:#1e1e1e;letter-spacing:0px;transform:scaleX(0.905);transform-origin:0 50%;-webkit-text-stroke:0.12px #222">75463042000168</div>
<div class="t" style="left:897px;top:367.20px;font-size:10px;line-height:11.50px;font-weight:400;color:#1e1e1e;letter-spacing:0px;transform:scaleX(0.905);transform-origin:0 50%;-webkit-text-stroke:0.12px #222">1</div>
<div class="t" style="left:943px;top:367.20px;font-size:10px;line-height:11.50px;font-weight:400;color:#1e1e1e;letter-spacing:0px;transform:scaleX(0.905);transform-origin:0 50%;-webkit-text-stroke:0.12px #222">1</div>
<div class="t" style="left:991.7px;top:367.20px;font-size:10px;line-height:11.50px;font-weight:400;color:#1e1e1e;letter-spacing:0px;transform:scaleX(0.905);transform-origin:0 50%;-webkit-text-stroke:0.12px #222">391.42 Kg</div>
<div class="t" style="left:1040.4px;top:360.30px;font-size:10px;line-height:11.50px;font-weight:400;color:#1e1e1e;letter-spacing:0px;transform:scaleX(0.905);transform-origin:0 50%;-webkit-text-stroke:0.12px #222">40.0000</div>
<div class="t" style="left:1040.4px;top:374.10px;font-size:10px;line-height:11.50px;font-weight:400;color:#1e1e1e;letter-spacing:0px;transform:scaleX(0.905);transform-origin:0 50%;-webkit-text-stroke:0.12px #222">m³</div>
<div class="t" style="left:1091.4px;top:367.20px;font-size:10px;line-height:11.50px;font-weight:400;color:#1e1e1e;letter-spacing:0px;transform:scaleX(0.905);transform-origin:0 50%;-webkit-text-stroke:0.12px #222">R$ 1.203,13</div>
<div class="a" style="left:336px;top:392px;width:10px;height:10px;border:1px solid #333;border-radius:1px;background:#fff"></div>
<div class="t" style="left:348.2px;top:391.65px;font-size:10px;line-height:11.50px;font-weight:400;color:#1e1e1e;letter-spacing:0px;transform:scaleX(0.905);transform-origin:0 50%;-webkit-text-stroke:0.12px #222">9999998481</div>
<div class="t" style="left:475.6px;top:391.65px;font-size:10px;line-height:11.50px;font-weight:400;color:#1e1e1e;letter-spacing:0px;transform:scaleX(0.905);transform-origin:0 50%;-webkit-text-stroke:0.12px #222">WANDER BONATTO</div>
<div class="t" style="left:616.4px;top:391.65px;font-size:10px;line-height:11.50px;font-weight:400;color:#1e1e1e;letter-spacing:0px;transform:scaleX(0.905);transform-origin:0 50%;-webkit-text-stroke:0.12px #222">WANDER BONATTO</div>
<div class="t" style="left:756.5px;top:391.65px;font-size:10px;line-height:11.50px;font-weight:400;color:#1e1e1e;letter-spacing:0px;transform:scaleX(0.905);transform-origin:0 50%;-webkit-text-stroke:0.12px #222">37428518000130</div>
<div class="t" style="left:897px;top:391.65px;font-size:10px;line-height:11.50px;font-weight:400;color:#1e1e1e;letter-spacing:0px;transform:scaleX(0.905);transform-origin:0 50%;-webkit-text-stroke:0.12px #222">1</div>
<div class="t" style="left:943px;top:391.65px;font-size:10px;line-height:11.50px;font-weight:400;color:#1e1e1e;letter-spacing:0px;transform:scaleX(0.905);transform-origin:0 50%;-webkit-text-stroke:0.12px #222">1</div>
<div class="t" style="left:991.7px;top:391.65px;font-size:10px;line-height:11.50px;font-weight:400;color:#1e1e1e;letter-spacing:0px;transform:scaleX(0.905);transform-origin:0 50%;-webkit-text-stroke:0.12px #222">113.40 Kg</div>
<div class="t" style="left:1040.4px;top:391.65px;font-size:10px;line-height:11.50px;font-weight:400;color:#1e1e1e;letter-spacing:0px;transform:scaleX(0.905);transform-origin:0 50%;-webkit-text-stroke:0.12px #222">11.0000 m³</div>
<div class="t" style="left:1091.4px;top:391.65px;font-size:10px;line-height:11.50px;font-weight:400;color:#1e1e1e;letter-spacing:0px;transform:scaleX(0.905);transform-origin:0 50%;-webkit-text-stroke:0.12px #222">R$ 860,37</div>
<div class="a" style="left:336px;top:412px;width:10px;height:10px;border:1px solid #333;border-radius:1px;background:#fff"></div>
<div class="t" style="left:348.2px;top:411.60px;font-size:10px;line-height:11.50px;font-weight:400;color:#1e1e1e;letter-spacing:0px;transform:scaleX(0.905);transform-origin:0 50%;-webkit-text-stroke:0.12px #222">9999998476</div>
<div class="t" style="left:475.6px;top:411.60px;font-size:10px;line-height:11.50px;font-weight:400;color:#1e1e1e;letter-spacing:0px;transform:scaleX(0.905);transform-origin:0 50%;-webkit-text-stroke:0.12px #222">CLEIDE ROSSETTO DE SOUZA</div>
<div class="t" style="left:616.4px;top:411.60px;font-size:10px;line-height:11.50px;font-weight:400;color:#1e1e1e;letter-spacing:0px;transform:scaleX(0.905);transform-origin:0 50%;-webkit-text-stroke:0.12px #222">CLEIDE ROSSETTO DE SOUZA</div>
<div class="t" style="left:756.5px;top:411.60px;font-size:10px;line-height:11.50px;font-weight:400;color:#1e1e1e;letter-spacing:0px;transform:scaleX(0.905);transform-origin:0 50%;-webkit-text-stroke:0.12px #222">33257277000153</div>
<div class="t" style="left:897px;top:411.60px;font-size:10px;line-height:11.50px;font-weight:400;color:#1e1e1e;letter-spacing:0px;transform:scaleX(0.905);transform-origin:0 50%;-webkit-text-stroke:0.12px #222">1</div>
<div class="t" style="left:943px;top:411.60px;font-size:10px;line-height:11.50px;font-weight:400;color:#1e1e1e;letter-spacing:0px;transform:scaleX(0.905);transform-origin:0 50%;-webkit-text-stroke:0.12px #222">1</div>
<div class="t" style="left:991.7px;top:411.60px;font-size:10px;line-height:11.50px;font-weight:400;color:#1e1e1e;letter-spacing:0px;transform:scaleX(0.905);transform-origin:0 50%;-webkit-text-stroke:0.12px #222">42.56 Kg</div>
<div class="t" style="left:1040.4px;top:411.60px;font-size:10px;line-height:11.50px;font-weight:400;color:#1e1e1e;letter-spacing:0px;transform:scaleX(0.905);transform-origin:0 50%;-webkit-text-stroke:0.12px #222">8.0000 m³</div>
<div class="t" style="left:1091.4px;top:411.60px;font-size:10px;line-height:11.50px;font-weight:400;color:#1e1e1e;letter-spacing:0px;transform:scaleX(0.905);transform-origin:0 50%;-webkit-text-stroke:0.12px #222">R$ 262,35</div>
<div class="a" style="left:336px;top:437px;width:10px;height:10px;border:1px solid #333;border-radius:1px;background:#fff"></div>
<div class="t" style="left:348.2px;top:436.20px;font-size:10px;line-height:11.50px;font-weight:400;color:#1e1e1e;letter-spacing:0px;transform:scaleX(0.905);transform-origin:0 50%;-webkit-text-stroke:0.12px #222">9999998475</div>
<div class="t" style="left:475.6px;top:429.30px;font-size:10px;line-height:11.50px;font-weight:400;color:#1e1e1e;letter-spacing:0px;transform:scaleX(0.905);transform-origin:0 50%;-webkit-text-stroke:0.12px #222">MERCADO ALEXANDRE DE</div>
<div class="t" style="left:475.6px;top:443.10px;font-size:10px;line-height:11.50px;font-weight:400;color:#1e1e1e;letter-spacing:0px;transform:scaleX(0.905);transform-origin:0 50%;-webkit-text-stroke:0.12px #222">OLIVEIRA LTDA ME</div>
<div class="t" style="left:616.4px;top:429.30px;font-size:10px;line-height:11.50px;font-weight:400;color:#1e1e1e;letter-spacing:0px;transform:scaleX(0.905);transform-origin:0 50%;-webkit-text-stroke:0.12px #222">MERCADO ALEXANDRE DE</div>
<div class="t" style="left:616.4px;top:443.10px;font-size:10px;line-height:11.50px;font-weight:400;color:#1e1e1e;letter-spacing:0px;transform:scaleX(0.905);transform-origin:0 50%;-webkit-text-stroke:0.12px #222">OLIVEIRA LTDA ME</div>
<div class="t" style="left:756.5px;top:436.20px;font-size:10px;line-height:11.50px;font-weight:400;color:#1e1e1e;letter-spacing:0px;transform:scaleX(0.905);transform-origin:0 50%;-webkit-text-stroke:0.12px #222">17201819000110</div>
<div class="t" style="left:897px;top:436.20px;font-size:10px;line-height:11.50px;font-weight:400;color:#1e1e1e;letter-spacing:0px;transform:scaleX(0.905);transform-origin:0 50%;-webkit-text-stroke:0.12px #222">1</div>
<div class="t" style="left:943px;top:436.20px;font-size:10px;line-height:11.50px;font-weight:400;color:#1e1e1e;letter-spacing:0px;transform:scaleX(0.905);transform-origin:0 50%;-webkit-text-stroke:0.12px #222">1</div>
<div class="t" style="left:991.7px;top:436.20px;font-size:10px;line-height:11.50px;font-weight:400;color:#1e1e1e;letter-spacing:0px;transform:scaleX(0.905);transform-origin:0 50%;-webkit-text-stroke:0.12px #222">3.00 Kg</div>
<div class="t" style="left:1040.4px;top:436.20px;font-size:10px;line-height:11.50px;font-weight:400;color:#1e1e1e;letter-spacing:0px;transform:scaleX(0.905);transform-origin:0 50%;-webkit-text-stroke:0.12px #222">3.0000 m³</div>
<div class="t" style="left:1091.4px;top:436.20px;font-size:10px;line-height:11.50px;font-weight:400;color:#1e1e1e;letter-spacing:0px;transform:scaleX(0.905);transform-origin:0 50%;-webkit-text-stroke:0.12px #222">R$ 117,00</div>
<div class="a" style="left:336px;top:466px;width:10px;height:10px;border:1px solid #333;border-radius:1px;background:#fff"></div>
<div class="t" style="left:348.2px;top:465.30px;font-size:10px;line-height:11.50px;font-weight:400;color:#1e1e1e;letter-spacing:0px;transform:scaleX(0.905);transform-origin:0 50%;-webkit-text-stroke:0.12px #222">9999998486</div>
<div class="t" style="left:475.6px;top:458.40px;font-size:10px;line-height:11.50px;font-weight:400;color:#1e1e1e;letter-spacing:0px;transform:scaleX(0.905);transform-origin:0 50%;-webkit-text-stroke:0.12px #222">SALETE MARIA AGOSTINI</div>
<div class="t" style="left:475.6px;top:472.20px;font-size:10px;line-height:11.50px;font-weight:400;color:#1e1e1e;letter-spacing:0px;transform:scaleX(0.905);transform-origin:0 50%;-webkit-text-stroke:0.12px #222">MARTINS ME</div>
<div class="t" style="left:616.4px;top:458.40px;font-size:10px;line-height:11.50px;font-weight:400;color:#1e1e1e;letter-spacing:0px;transform:scaleX(0.905);transform-origin:0 50%;-webkit-text-stroke:0.12px #222">SALETE MARIA AGOSTINI</div>
<div class="t" style="left:616.4px;top:472.20px;font-size:10px;line-height:11.50px;font-weight:400;color:#1e1e1e;letter-spacing:0px;transform:scaleX(0.905);transform-origin:0 50%;-webkit-text-stroke:0.12px #222">MARTINS ME</div>
<div class="t" style="left:756.5px;top:465.30px;font-size:10px;line-height:11.50px;font-weight:400;color:#1e1e1e;letter-spacing:0px;transform:scaleX(0.905);transform-origin:0 50%;-webkit-text-stroke:0.12px #222">95801700000191</div>
<div class="t" style="left:897px;top:465.30px;font-size:10px;line-height:11.50px;font-weight:400;color:#1e1e1e;letter-spacing:0px;transform:scaleX(0.905);transform-origin:0 50%;-webkit-text-stroke:0.12px #222">1</div>
<div class="t" style="left:943px;top:465.30px;font-size:10px;line-height:11.50px;font-weight:400;color:#1e1e1e;letter-spacing:0px;transform:scaleX(0.905);transform-origin:0 50%;-webkit-text-stroke:0.12px #222">1</div>
<div class="t" style="left:991.7px;top:465.30px;font-size:10px;line-height:11.50px;font-weight:400;color:#1e1e1e;letter-spacing:0px;transform:scaleX(0.905);transform-origin:0 50%;-webkit-text-stroke:0.12px #222">23.27 Kg</div>
<div class="t" style="left:1040.4px;top:465.30px;font-size:10px;line-height:11.50px;font-weight:400;color:#1e1e1e;letter-spacing:0px;transform:scaleX(0.905);transform-origin:0 50%;-webkit-text-stroke:0.12px #222">7.0000 m³</div>
<div class="t" style="left:1091.4px;top:465.30px;font-size:10px;line-height:11.50px;font-weight:400;color:#1e1e1e;letter-spacing:0px;transform:scaleX(0.905);transform-origin:0 50%;-webkit-text-stroke:0.12px #222">R$ 418,94</div>
<div class="a" style="left:138px;top:545px;width:1039px;height:1px;background:#e9ecef"></div>
<div class="a" style="left:941px;top:554px;width:81px;height:25px;background:#e0e0e0;border-radius:3px"></div>
<div class="t" style="left:970px;top:560.81px;font-size:9.9px;line-height:11.38px;font-weight:400;color:#ababab;letter-spacing:0px;">Transferir</div>
<svg style="left:955px;top:561.5px" width="11" height="9"><path d="M1 2.5 H9.5 M7.5 0.8 L9.8 2.5 M10 6.5 H1.5 M3.5 8.2 L1.2 6.5" fill="none" stroke="#aaa" stroke-width="0.9"/></svg>
<div class="a" style="left:1029px;top:554px;width:72px;height:25px;background:#e0e0e0;border-radius:3px"></div>
<div class="t" style="left:1051.5px;top:560.81px;font-size:9.9px;line-height:11.38px;font-weight:400;color:#ababab;letter-spacing:0px;">Remover</div>
<svg style="left:1041.5px;top:561.5px" width="7" height="9"><path d="M0.3 1.5 H6.7 M2.3 1.5 V0.5 H4.7 V1.5 M1 2.5 H6 V8.5 H1 Z" fill="none" stroke="#b5b5b5" stroke-width="0.8"/></svg>
<div class="a" style="left:1105px;top:554px;width:63px;height:25px;background:#c0392b;border-radius:3px;box-shadow:0 2px 3px rgba(0,0,0,.3)"></div>
<div class="t" style="left:1127.4px;top:560.48px;font-size:9.6px;line-height:11.04px;font-weight:700;color:#fff;letter-spacing:0px;">Fechar</div>
<div class="t" style="left:1116.5px;top:559.02px;font-size:13px;line-height:14.95px;font-weight:400;color:#fff;letter-spacing:0px;">×</div>
<div class="a" style="left:1193px;top:28px;width:17px;height:572px;background:#f1f1f1"></div>
<div class="a" style="left:1195px;top:44px;width:13px;height:535px;background:#c1c1c1"></div>
<svg style="left:1197px;top:33px" width="9" height="6"><path d="M0 5 L4.5 0.5 L9 5 Z" fill="#a3a3a3"/></svg>
<svg style="left:1197px;top:589px" width="9" height="6"><path d="M0 0.5 L4.5 5 L9 0.5 Z" fill="#505050"/></svg>
</body></html>
